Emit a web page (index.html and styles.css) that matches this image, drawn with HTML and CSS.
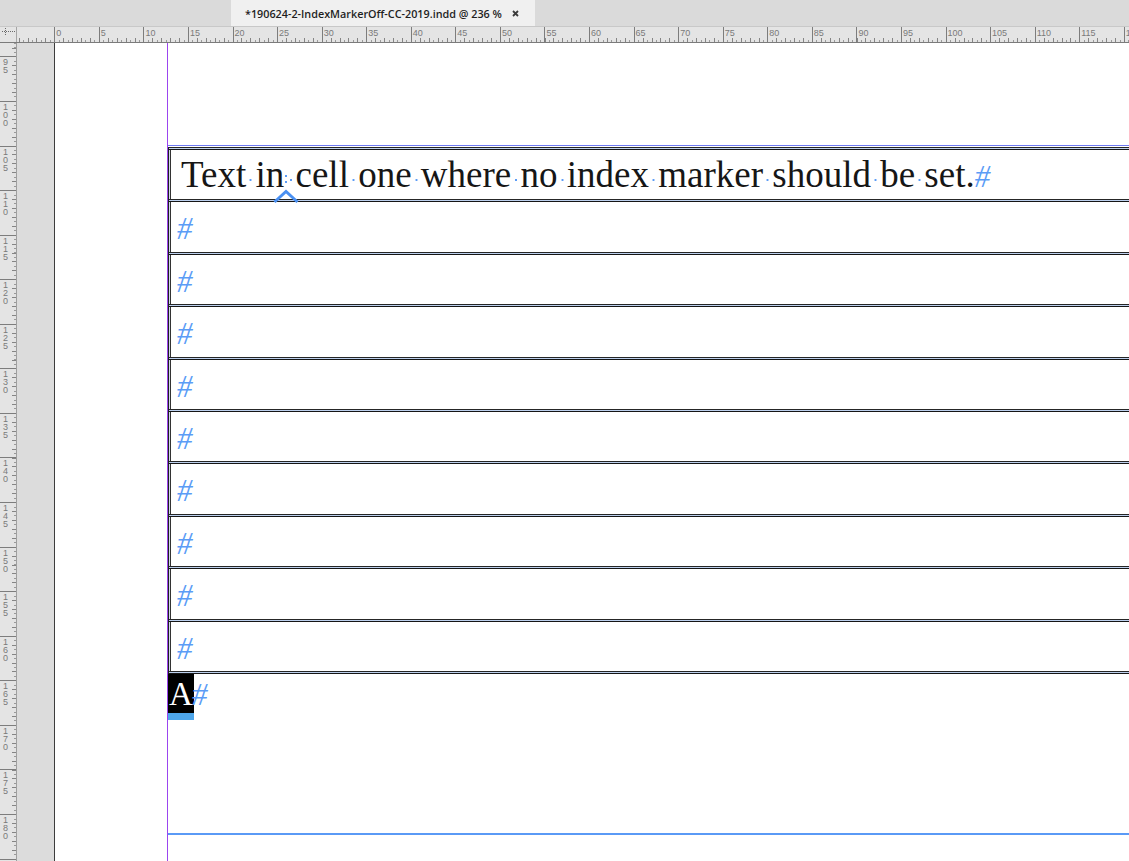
FILE: index.html
```html
<!DOCTYPE html>
<html>
<head>
<meta charset="utf-8">
<title>IndexMarkerOff</title>
<link rel="stylesheet" href="styles.css">
</head>
<body>
<div class="app">
  <div class="tabbar">
    <div class="tab">
      <span class="tab-title">*190624-2-IndexMarkerOff-CC-2019.indd @ 236 %</span>
      <svg class="tab-close" width="7" height="7" viewBox="0 0 7 7"><path d="M1 1L6 6M6 1L1 6" stroke="#3a3a3a" stroke-width="1.8"/></svg>
    </div>
  </div>
  <div class="rulerrow">
    <div class="corner">
      <svg width="16" height="15" viewBox="0 0 16 15"><path d="M2 4.5H15" stroke="#6a6a6a" stroke-dasharray="1 1"/><path d="M5.5 1V9" stroke="#6a6a6a" stroke-dasharray="1 1"/></svg>
    </div>
    <div class="hruler">
      <div class="hl">0</div><div class="hl">5</div><div class="hl">10</div><div class="hl">15</div><div class="hl">20</div>
      <div class="hl">25</div><div class="hl">30</div><div class="hl">35</div><div class="hl">40</div><div class="hl">45</div>
      <div class="hl">50</div><div class="hl">55</div><div class="hl">60</div><div class="hl">65</div><div class="hl">70</div>
      <div class="hl">75</div><div class="hl">80</div><div class="hl">85</div><div class="hl">90</div><div class="hl">95</div>
      <div class="hl">100</div><div class="hl">105</div><div class="hl">110</div><div class="hl">115</div><div class="hl">120</div>
    </div>
  </div>
  <div class="main">
    <div class="vruler">
      <div class="vl">9<br>5</div>
      <div class="vl">1<br>0<br>0</div>
      <div class="vl">1<br>0<br>5</div>
      <div class="vl">1<br>1<br>0</div>
      <div class="vl">1<br>1<br>5</div>
      <div class="vl">1<br>2<br>0</div>
      <div class="vl">1<br>2<br>5</div>
      <div class="vl">1<br>3<br>0</div>
      <div class="vl">1<br>3<br>5</div>
      <div class="vl">1<br>4<br>0</div>
      <div class="vl">1<br>4<br>5</div>
      <div class="vl">1<br>5<br>0</div>
      <div class="vl">1<br>5<br>5</div>
      <div class="vl">1<br>6<br>0</div>
      <div class="vl">1<br>6<br>5</div>
      <div class="vl">1<br>7<br>0</div>
      <div class="vl">1<br>7<br>5</div>
      <div class="vl">1<br>8<br>0</div>
      <div class="vl">1<br>8<br>5</div>
    </div>
    <div class="pasteboard"></div>
    <div class="page">
      <div class="lmargin"></div>
      <div class="column">
        <div class="frame">
          <div class="table">
            <div class="row"><div class="cell first">Text<span class="sp"></span>in<span class="idx"><i class="colon"></i><svg class="chev" width="28" height="15" viewBox="0 0 28 15"><path d="M2.5 13L14 2.5L25.5 13" fill="none" stroke="#4a90f2" stroke-width="3"/></svg></span><span class="sp"></span>cell<span class="sp"></span>one<span class="sp"></span>where<span class="sp"></span>no<span class="sp"></span>index<span class="sp"></span>marker<span class="sp"></span>should<span class="sp"></span>be<span class="sp"></span>set.<span class="hash">#</span></div></div>
            <div class="row"><div class="cell h"><span class="hash">#</span></div></div>
            <div class="row"><div class="cell h"><span class="hash">#</span></div></div>
            <div class="row"><div class="cell h"><span class="hash">#</span></div></div>
            <div class="row"><div class="cell h"><span class="hash">#</span></div></div>
            <div class="row"><div class="cell h"><span class="hash">#</span></div></div>
            <div class="row"><div class="cell h"><span class="hash">#</span></div></div>
            <div class="row"><div class="cell h"><span class="hash">#</span></div></div>
            <div class="row"><div class="cell h"><span class="hash">#</span></div></div>
            <div class="row"><div class="cell h"><span class="hash">#</span></div></div>
            <div class="tbottom"></div>
          </div>
          <div class="after">
            <div class="selcol">
              <div class="sel">A</div>
              <div class="selbar"></div>
            </div>
            <div class="hash2">#</div>
          </div>
        </div>
      </div>
    </div>
  </div>
</div>
</body>
</html>
```
FILE: styles.css
```css
* { box-sizing: border-box; }
html, body { margin: 0; padding: 0; }
body {
  width: 1129px;
  height: 861px;
  overflow: hidden;
  background: #dadada;
  font-family: "Liberation Sans", Arial, sans-serif;
}
.app { display: flex; flex-direction: column; height: 861px; }

/* tab bar */
.tabbar {
  flex: none;
  height: 27px;
  border-bottom: 1px solid #c8c8c8;
  background: #dadada;
  display: flex;
}
.tab {
  margin-left: 231px;
  width: 304px;
  height: 26px;
  background: #f0f0f0;
  display: flex;
  align-items: center;
  padding-left: 14px;
  padding-right: 16px;
}
.tab-title {
  font-family: "Open Sans", sans-serif;
  font-weight: 600;
  font-size: 10.8px;
  color: #1e1e1e;
  white-space: nowrap;
}
.tab-close { margin-left: auto; flex: none; }

/* horizontal ruler */
.rulerrow {
  flex: none;
  height: 16px;
  border-bottom: 1px solid #7b7b7b;
  display: flex;
  background: #e4e4e4;
}
.corner {
  flex: none;
  width: 17px;
  border-right: 1px solid #a5a5a5;
}
.corner svg { display: block; }
.hruler {
  flex: 1;
  min-width: 0;
  display: flex;
  padding-left: 37.3px;
  overflow: hidden;
  background:
    repeating-linear-gradient(to right, transparent 0 1.64px, #858585 1.64px 2.64px, transparent 2.64px 8.914px) left bottom / 100% 4px no-repeat,
    repeating-linear-gradient(to right, transparent 0 1.64px, #9a9a9a 1.64px 2.64px, transparent 2.64px 4.457px) left bottom / 100% 2px no-repeat,
    #e4e4e4;
}
.hl {
  flex: none;
  width: 44.57px;
  height: 15px;
  border-left: 1px solid #7d7d7d;
  padding-left: 1px;
  padding-top: 1px;
  font-size: 9px;
  line-height: 10px;
  color: #7a7a7a;
}

/* main area */
.main { flex: 1; display: flex; min-height: 0; }
.vruler {
  flex: none;
  width: 17px;
  border-right: 1px solid #9f9f9f;
  padding-top: 13.43px;
  overflow: hidden;
  background:
    repeating-linear-gradient(to bottom, transparent 0 4.52px, #858585 4.52px 5.52px, transparent 5.52px 8.914px) right top / 4px 100% no-repeat,
    repeating-linear-gradient(to bottom, #9a9a9a 0 1px, transparent 1px 4.457px) right top / 2px 100% no-repeat,
    #e4e4e4;
}
.vl {
  height: 44.57px;
  border-top: 1px solid #7d7d7d;
  padding-top: 1px;
  padding-left: 3px;
  font-size: 9px;
  line-height: 8px;
  color: #7a7a7a;
}
.pasteboard {
  flex: none;
  width: 38px;
  border-right: 1px solid #3c3c3c;
  background: #dcdcdc;
}
.page {
  flex: 1;
  min-width: 0;
  background: #fff;
  display: flex;
}
.lmargin { flex: none; width: 112px; }
.column {
  flex: 1;
  min-width: 0;
  border-left: 1px solid #9b45ef;
  overflow: hidden;
  padding-top: 102px;
}
.frame {
  height: 690px;
  border-top: 1px solid #6f7af2;
  border-bottom: 2px solid #5a9af6;
  padding-top: 1px;
}

/* table */
.table {
  width: 1200px;
  border-left: 1px solid #1f1f1f;
}
.row {
  height: 52.4px;
  border-top: 1px solid #262626;
  padding-top: 2px;
  box-shadow:
    inset 0 1px 0 #bcd0ee,
    inset 0 2px 0 #161616,
    inset 1px 0 0 #cfd9ea,
    inset 2px 0 0 #333;
  font-family: "Liberation Serif", "Times New Roman", serif;
  font-size: 37px;
  line-height: 49px;
  color: #161616;
  white-space: nowrap;
}
.cell { padding-left: 12px; }
.cell.h { padding-left: 8px; }
.tbottom {
  height: 3px;
  border-top: 1px solid #262626;
  box-shadow: inset 0 1px 0 #bcd0ee, inset 0 2px 0 #161616;
}

/* hidden characters */
.sp {
  display: inline-block;
  width: 0.25em;
  height: 2px;
  vertical-align: 6px;
  background: radial-gradient(circle at center, #5b9cf6 0 0.9px, transparent 1.3px);
}
.idx {
  display: inline-block;
  position: relative;
  width: 2px;
  height: 0;
}
.colon {
  position: absolute;
  left: 1px;
  top: -12px;
  width: 2px;
  height: 8px;
  background:
    radial-gradient(circle at center, #5b9cf6 0 0.9px, transparent 1.3px) center top / 2px 2px no-repeat,
    radial-gradient(circle at center, #5b9cf6 0 0.9px, transparent 1.3px) center bottom / 2px 2px no-repeat;
}
.chev {
  position: absolute;
  left: -12px;
  top: 2px;
  display: block;
  z-index: 2;
}
.hash {
  font-family: "Liberation Serif", "Times New Roman", serif;
  font-style: italic;
  font-size: 31px;
  line-height: 0;
  color: #5b9cf6;
}

/* paragraph after table */
.after {
  display: flex;
  align-items: baseline;
}
.selcol { display: flex; flex-direction: column; }
.sel {
  width: 26px;
  height: 39px;
  padding-top: 2px;
  background: #000;
  color: #fff;
  font-family: "Liberation Serif", "Times New Roman", serif;
  font-size: 33px;
  line-height: 37px;
  text-align: center;
  overflow: hidden;
}
.selbar { height: 7px; background: #4ea6ea; }
.hash2 {
  margin-left: -2px;
  font-family: "Liberation Serif", "Times New Roman", serif;
  font-style: italic;
  font-size: 31px;
  line-height: 37px;
  color: #5b9cf6;
}
```
